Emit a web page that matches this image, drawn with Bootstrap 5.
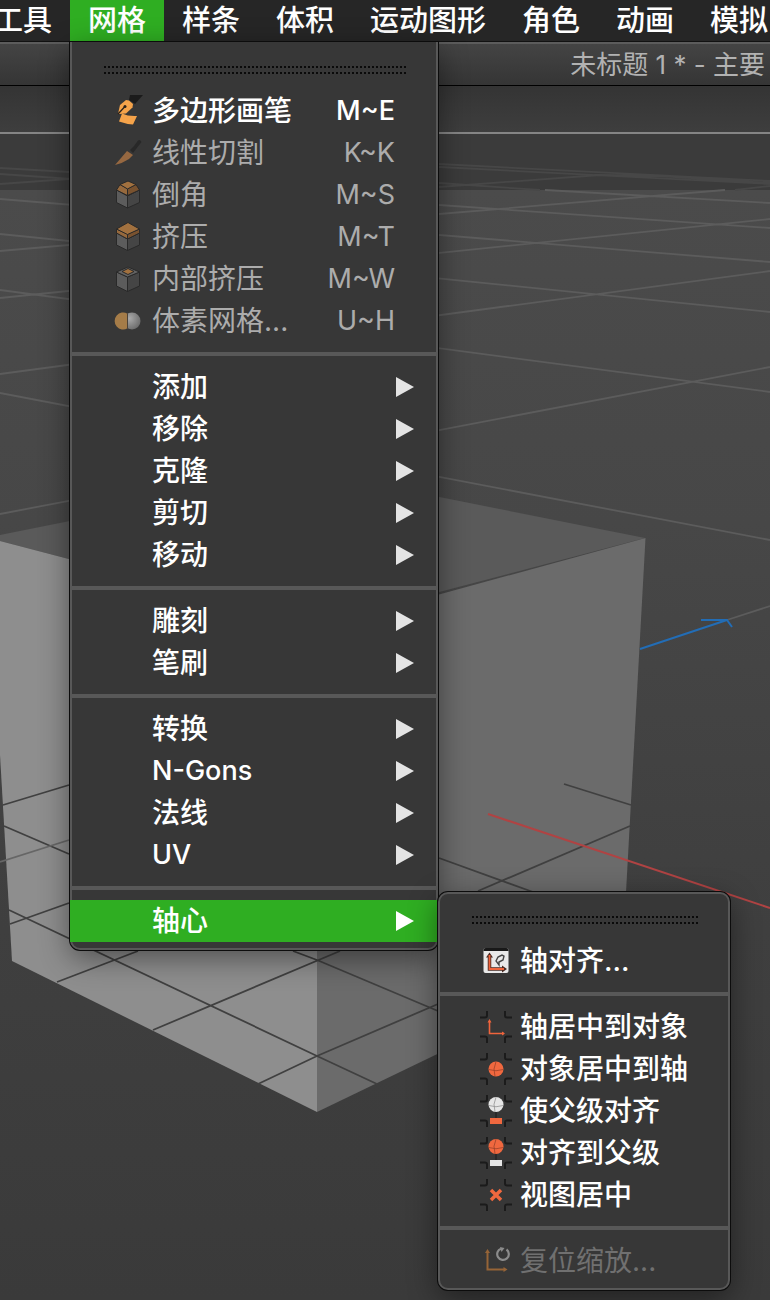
<!DOCTYPE html>
<html lang="zh-CN">
<head>
<meta charset="utf-8">
<meta name="viewport" content="width=device-width, initial-scale=1">
<title>未标题 1 * - 主要</title>
<link href="https://cdn.jsdelivr.net/npm/bootstrap@5.3.0/dist/css/bootstrap.min.css" rel="stylesheet">
<style>
  :root { --panel: #373737; --edge: #585858; --accent: #2fae22; --grey: #acacac; }
  body { background: #3c3c3c; color: #fff; font-family: Inter, "Noto Sans CJK SC", sans-serif; font-size: 28px; line-height: 42px; font-weight: 500; }
  button { font: inherit; color: inherit; background: none; border: 0; padding: 0; text-align: start; }
  .menubar { background: #262626; border-bottom: 1px solid #121212; z-index: 3; font-size: 29px; }
  .menubar-list { margin-left: -24px; }
  .menubar-btn { display: block; padding: 0 18px; line-height: 41px; white-space: nowrap; }
  .menubar-btn.open { background: var(--accent); }
  .titlebar { background: linear-gradient(#444, #353535); border-top: 2px solid #5c5c5c; border-bottom: 1px solid #000; color: #b2b2b2; font-size: 26px; line-height: 41px; font-weight: 400; padding-right: 5px; white-space: nowrap; }
  .scene { min-height: 400px; }
  .menu-panel { position: absolute; background: var(--panel); border: 2px solid var(--edge); border-radius: 10px; padding: 22px 0 6px; font-size: 28px; box-shadow: 0 0 0 1px #0c0c0c, 0 8px 30px rgba(0,0,0,.45); }
  .menu-main { top: 42px; left: 0; width: 368px; border-top: 0; border-radius: 0 0 10px 10px; padding-top: 24px; }
  .menu-sub { top: -8px; left: calc(100% + 2px); width: 292px; }
  .grip { height: 8px; margin: 0 30px 16px 32px; background: conic-gradient(from 270deg at 2px 2px, #0a0a0a 90deg, transparent 0) 0 0 / 4px 6px; }
  .menu-row { display: flex; align-items: center; width: calc(100% + 4px); height: 42px; margin: 0 -2px; padding: 0 24px 0 42px; white-space: nowrap; }
  .menu-row .glyph { width: 32px; height: 32px; flex: none; margin-right: 8px; }
  .menu-row .keys { margin-left: auto; margin-right: 19px; }
  .menu-row .keys, .menu-row .latin { font-size: 27px; }
  .menu-row .tri { width: 18px; height: 20px; margin-left: auto; fill: #e4e4e4; }
  .menu-row:disabled { color: var(--grey); font-weight: 400; }
  .menu-row.dim:disabled { color: #707070; }
  .menu-row.open { background: var(--accent); }
  .menu-row.open .tri { fill: #fff; }
  .rule { height: 4px; margin: 10px -2px; background: var(--edge); }
</style>
</head>
<body class="min-vh-100 d-flex flex-column overflow-hidden">

<svg class="position-absolute" width="0" height="0" aria-hidden="true">
  <defs>
    <radialGradient id="ball" cx=".35" cy=".35" r=".7"><stop offset="0" stop-color="#aaa"/><stop offset="1" stop-color="#6c6c6c"/></radialGradient>
    <g id="corners" fill="none" stroke="#1b1b1b" stroke-width="2">
      <path d="M0 6.500H5q2 0 2-2V0M32 6.500H27q-2 0-2-2V0M0 25.500H5q2 0 2 2V32M32 25.500H27q-2 0-2 2V32"/>
    </g>
  </defs>
</svg>

<nav class="menubar position-relative" aria-label="主菜单">
  <ul class="menubar-list list-unstyled d-flex flex-nowrap mb-0">
    <li><button class="menubar-btn" type="button">工具</button></li>
    <li class="position-relative">
      <button class="menubar-btn open" type="button" aria-expanded="true">网格</button>
      <div class="menu-panel menu-main">
        <div class="grip"></div>
        <button class="menu-row" type="button">
          <svg class="glyph" viewBox="0 0 32 32"><path d="M18 0H31L23 9 17 5z" fill="#1b1b1b"/><path d="M6 19L8 10 14 5 17 5.500 21 9 20.500 12.500 14 18.500 7 19z" fill="#f5a34a"/><path d="M6 19L12.500 12" stroke="#2a2119" stroke-width="1.300"/><circle cx="13" cy="11.500" r="1.500" fill="#2a2119"/><path d="M7 26.500L10 18.500Q16 21.500 25 21L21 29.500Q14 29 7 26.500z" fill="#f5a34a"/></svg>
          <span>多边形画笔</span><span class="keys">M~E</span></button>
        <button class="menu-row" type="button" disabled>
          <svg class="glyph" viewBox="0 0 32 32"><path d="M3 28L15 14 21 18 17 22Q11 26 3 28z" fill="#966841"/><path d="M18 13L20 11 22 9 26 3.500Q28 2 29.500 5L21 16z" fill="#282828"/></svg>
          <span>线性切割</span><span class="keys">K~K</span></button>
        <button class="menu-row" type="button" disabled>
          <svg class="glyph" viewBox="0 0 32 32" stroke="#292929" stroke-linejoin="round"><path d="M4.500 11L15.500 17V29L4.500 23.500z" fill="#5c5c5c"/><path d="M27.500 11L15.500 17V29L27.500 23.500z" fill="#454545"/><path d="M8 5.500L4.500 11 15.500 16.500V9.500z" fill="#96693d"/><path d="M24 5.500L27.500 11 15.500 16.500V9.500z" fill="#79522f"/><path d="M16 2L24 5.500 15.500 10 8 5.500z" fill="#a2713f"/></svg>
          <span>倒角</span><span class="keys">M~S</span></button>
        <button class="menu-row" type="button" disabled>
          <svg class="glyph" viewBox="0 0 32 32" stroke="#292929" stroke-linejoin="round"><path d="M4.500 12L15.500 18V29.500L4.500 24z" fill="#5c5c5c"/><path d="M27.500 12L15.500 18V29.500L27.500 24z" fill="#454545"/><path d="M4.500 8V12L15.500 18V13z" fill="#96693d"/><path d="M27.500 8V12L15.500 18V13z" fill="#79522f"/><path d="M16 1.500L27.500 8 15.500 13.500 4.500 8z" fill="#a2713f"/></svg>
          <span>挤压</span><span class="keys">M~T</span></button>
        <button class="menu-row" type="button" disabled>
          <svg class="glyph" viewBox="0 0 32 32" stroke="#292929" stroke-linejoin="round"><path d="M4.500 9L15.500 14V28.500L4.500 23z" fill="#5c5c5c"/><path d="M27.500 9L15.500 14V28.500L27.500 23z" fill="#454545"/><path d="M16 4L27.500 9 15.500 14 4.500 9z" fill="#636363"/><path d="M16 5.500L22 8.500 16 11.500 10 8.500z" fill="#a2713f"/></svg>
          <span>内部挤压</span><span class="keys">M~W</span></button>
        <button class="menu-row" type="button" disabled>
          <svg class="glyph" viewBox="0 0 32 32"><circle cx="20" cy="16" r="8.500" fill="url(#ball)"/><path d="M15.500 8.700A8.500 8.500 0 1 0 15.500 23.300z" fill="#a57c48"/><path d="M15.500 8.500V23.500" stroke="#4c4238"/></svg>
          <span>体素网格...</span><span class="keys">U~H</span></button>
        <div class="rule"></div>
        <button class="menu-row" type="button"><span class="glyph"></span><span>添加</span><svg class="tri" viewBox="0 0 18 20"><path d="M0 0L18 10 0 20z"/></svg></button>
        <button class="menu-row" type="button"><span class="glyph"></span><span>移除</span><svg class="tri" viewBox="0 0 18 20"><path d="M0 0L18 10 0 20z"/></svg></button>
        <button class="menu-row" type="button"><span class="glyph"></span><span>克隆</span><svg class="tri" viewBox="0 0 18 20"><path d="M0 0L18 10 0 20z"/></svg></button>
        <button class="menu-row" type="button"><span class="glyph"></span><span>剪切</span><svg class="tri" viewBox="0 0 18 20"><path d="M0 0L18 10 0 20z"/></svg></button>
        <button class="menu-row" type="button"><span class="glyph"></span><span>移动</span><svg class="tri" viewBox="0 0 18 20"><path d="M0 0L18 10 0 20z"/></svg></button>
        <div class="rule"></div>
        <button class="menu-row" type="button"><span class="glyph"></span><span>雕刻</span><svg class="tri" viewBox="0 0 18 20"><path d="M0 0L18 10 0 20z"/></svg></button>
        <button class="menu-row" type="button"><span class="glyph"></span><span>笔刷</span><svg class="tri" viewBox="0 0 18 20"><path d="M0 0L18 10 0 20z"/></svg></button>
        <div class="rule"></div>
        <button class="menu-row" type="button"><span class="glyph"></span><span>转换</span><svg class="tri" viewBox="0 0 18 20"><path d="M0 0L18 10 0 20z"/></svg></button>
        <button class="menu-row" type="button"><span class="glyph"></span><span class="latin">N-Gons</span><svg class="tri" viewBox="0 0 18 20"><path d="M0 0L18 10 0 20z"/></svg></button>
        <button class="menu-row" type="button"><span class="glyph"></span><span>法线</span><svg class="tri" viewBox="0 0 18 20"><path d="M0 0L18 10 0 20z"/></svg></button>
        <button class="menu-row" type="button"><span class="glyph"></span><span class="latin">UV</span><svg class="tri" viewBox="0 0 18 20"><path d="M0 0L18 10 0 20z"/></svg></button>
        <div class="rule"></div>
        <div class="position-relative">
          <button class="menu-row open" type="button" aria-expanded="true"><span class="glyph"></span><span>轴心</span><svg class="tri" viewBox="0 0 18 20"><path d="M0 0L18 10 0 20z"/></svg></button>
          <div class="menu-panel menu-sub">
            <div class="grip"></div>
            <button class="menu-row" type="button">
              <svg class="glyph" viewBox="0 0 32 32"><rect x="3.500" y="3" width="25" height="25" rx="2" fill="#e9e9e9"/><path d="M3.500 6V5q0-2 2-2h21q2 0 2 2v1z" fill="#191919"/><path d="M9.500 11V24H24" fill="none" stroke="#4a2a22" stroke-width="3.500"/><path d="M6 12.500L9.500 7.500 13 12.500zM22 20.500L27 24 22 27.500z" fill="#4a2a22"/><path d="M9.500 10V24H24" fill="none" stroke="#f0643c" stroke-width="1.800"/><path d="M16 16L18 12 22 10 24 11 23 15 19 17V20z" fill="none" stroke="#444" stroke-width="1.400"/></svg>
              <span>轴对齐...</span></button>
            <div class="rule"></div>
            <button class="menu-row" type="button">
              <svg class="glyph" viewBox="0 0 32 32"><use href="#corners"/><path d="M9.500 10V22.500H24" fill="none" stroke="#f0643c" stroke-width="1.600"/><path d="M7.500 11.500L9.500 8 11.500 11.500zM22 20.500L25 22.500 22 24.500z" fill="#f0643c"/></svg>
              <span>轴居中到对象</span></button>
            <button class="menu-row" type="button">
              <svg class="glyph" viewBox="0 0 32 32"><use href="#corners"/><circle cx="16" cy="16" r="7.500" fill="#f0683f"/><path d="M8.700 16.500Q16 19 23.300 16.500M16 8.700Q12.500 16 15 23.300" fill="none" stroke="#9c412a" stroke-width=".8"/></svg>
              <span>对象居中到轴</span></button>
            <button class="menu-row" type="button">
              <svg class="glyph" viewBox="0 0 32 32"><use href="#corners"/><path d="M16 16V24" stroke="#1b1b1b"/><circle cx="16" cy="9.500" r="7.500" fill="#e6e6e6"/><path d="M8.700 10.500Q16 13 23.300 10.500M16 2.200Q12.500 9 15 16.800" fill="none" stroke="#929292" stroke-width=".8"/><rect x="10" y="23" width="12" height="6" fill="#f0683f"/></svg>
              <span>使父级对齐</span></button>
            <button class="menu-row" type="button">
              <svg class="glyph" viewBox="0 0 32 32"><use href="#corners"/><path d="M16 16V24" stroke="#1b1b1b"/><circle cx="16" cy="9.500" r="7.500" fill="#f0683f"/><path d="M8.700 10.500Q16 13 23.300 10.500M16 2.200Q12.500 9 15 16.800" fill="none" stroke="#9c412a" stroke-width=".8"/><rect x="10" y="23" width="12" height="6" fill="#e6e6e6"/></svg>
              <span>对齐到父级</span></button>
            <button class="menu-row" type="button">
              <svg class="glyph" viewBox="0 0 32 32"><use href="#corners"/><path d="M11 11L21 21M21 11L11 21" stroke="#f0683f" stroke-width="3.500"/></svg>
              <span>视图居中</span></button>
            <div class="rule"></div>
            <button class="menu-row dim" type="button" disabled>
              <svg class="glyph" viewBox="0 0 32 32"><path d="M7.500 7V24.500H25" fill="none" stroke="#966437" stroke-width="2"/><path d="M5 8L7.500 4 10 8zM23.500 22L27.500 24.500 23.500 27z" fill="#966437"/><path d="M26.500 4.500A5.800 5.800 0 1 1 21 3.700" fill="none" stroke="#8c8c8c" stroke-width="2.200"/><path d="M20 2L24.500 3 21.500 7z" fill="#8c8c8c"/></svg>
              <span>复位缩放...</span></button>
          </div>
        </div>
      </div>
    </li>
    <li><button class="menubar-btn" type="button">样条</button></li>
    <li><button class="menubar-btn" type="button">体积</button></li>
    <li><button class="menubar-btn" type="button">运动图形</button></li>
    <li><button class="menubar-btn" type="button">角色</button></li>
    <li><button class="menubar-btn" type="button">动画</button></li>
    <li><button class="menubar-btn" type="button">模拟</button></li>
  </ul>
</nav>

<header class="titlebar text-end">未标题 1 * - 主要</header>

<main class="flex-grow-1 d-flex">
  <svg class="scene w-100 flex-grow-1" viewBox="0 86 770 1214" preserveAspectRatio="xMinYMin slice" role="img" aria-label="透视视图">
    <defs>
      <linearGradient id="top" x2="0" y2="1"><stop offset="0" stop-color="#343434"/><stop offset="1" stop-color="#3e3e3e"/></linearGradient>
      <linearGradient id="floor" x2="0" y2="1"><stop offset="0" stop-color="#4b4b4b"/><stop offset=".3" stop-color="#474747"/><stop offset=".6" stop-color="#404040"/><stop offset="1" stop-color="#3a3a3a"/></linearGradient>
    </defs>
    <path d="M0 86H770V132H0z" fill="url(#top)"/>
    <path d="M0 134H770V190H0z" fill="#3b3b3b"/>
    <path d="M0 132H770V134H0z" fill="#858585"/>
    <path d="M0 190H770V1300H0z" fill="url(#floor)"/>
    <g fill="none" stroke="#474747" stroke-width="1.800">
      <path d="M439 164L770 181M439 167L770 184M439 183L540 190M439 187L600 175 660 176 770 183M735 190L770 186M0 168L69 172M0 174L230 190M0 184L69 179"/>
    </g>
    <!-- floor grid -->
    <g fill="none" stroke="#5c5c5c" stroke-width="1.800">
      <path d="M545 190L770 203M439 214L725 190M0 251L69 245M439 205L770 228M0 199L770 262M0 298L770 219M0 234L770 312M0 374L770 271M0 290L770 392M0 514L770 367M0 393L770 540M727 620L770 606"/>
    </g>
    <!-- cube -->
    <path d="M0 535L314 472 645 538 317 624 0 541z" fill="#5a5a5a"/>
    <path d="M0 541L317 624V1112L12 961 0 755z" fill="#8e8e8e"/>
    <path d="M645.500 538L317 628V1112L622 965z" fill="#6b6b6b"/>
    <g fill="none" stroke="#404040" stroke-width="1.800">
      <path d="M3 805L69 785M4 826L69 854M9 910L317 1056 377 1084M10 924L69 903M57 982L138 951M153 1030L340 951M258 1084L317 1056 438 1004M293 951L317 960 438 1011M564 784L631 805M630 826L478 891M439 858L533 892"/>
    </g>
    <path d="M0 862L69 840" stroke="#666" stroke-width="1.800"/>
    <path d="M640 649L727 620M701 620H727L732 627" fill="none" stroke="#226db6" stroke-width="2"/>
    <path d="M488 814L770 908" stroke="#b04343" stroke-width="2"/>
  </svg>
</main>

<script src="https://cdn.jsdelivr.net/npm/bootstrap@5.3.0/dist/js/bootstrap.bundle.min.js"></script>
</body>
</html>
